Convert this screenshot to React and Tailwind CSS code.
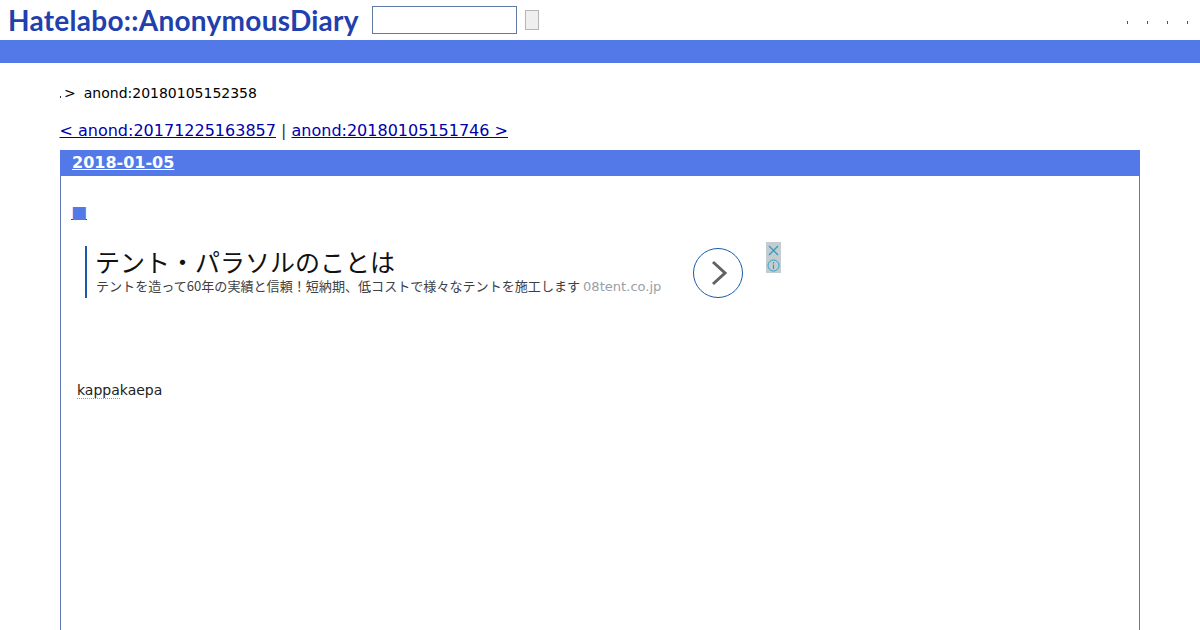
import React from 'react';

function AdSection() {
  return (
    <div className="ml-[24px] mt-[18px] flex h-[56px] items-start">
      <div className="mt-[4px] h-[52px] w-[608px] border-l-[2px] border-[#1a5aa8] pl-[8px]">
        <div className="h-[32px] whitespace-nowrap font-['Noto_Sans_CJK_JP',sans-serif] text-[25px] leading-[30px] text-[#111]">
          テント・パラソルのことは
        </div>
        <div className="ml-[1px] h-[20px] whitespace-nowrap font-['Noto_Sans_CJK_JP',sans-serif] text-[13.07px] leading-[16px] text-[#3c4043]">
          テントを造って60年の実績と信頼！短納期、低コストで様々なテントを施工します{' '}
          <span className="font-['DejaVu_Sans',sans-serif] text-[#9aa0a6]">08tent.co.jp</span>
        </div>
      </div>
      <div className="mt-[6px] flex h-[50px] w-[50px] shrink-0 items-center justify-center rounded-full border border-[#1a5aa8]">
        <svg width="18" height="26" viewBox="0 0 18 26" fill="none" className="ml-[2px]">
          <path d="M3 2l12 11L3 24" stroke="#5f6368" strokeWidth="3" />
        </svg>
      </div>
      <div className="ml-[23px] flex flex-col">
        <div className="flex h-[16px] w-[15px] items-center justify-center bg-[#c4ccd0]">
          <svg width="11" height="11" viewBox="0 0 11 11" fill="none">
            <path d="M1 1l9 9M10 1l-9 9" stroke="#2e9fc4" strokeWidth="1.4" />
          </svg>
        </div>
        <div className="flex h-[15px] w-[15px] items-center justify-center bg-[#c4ccd0]">
          <svg width="13" height="13" viewBox="0 0 13 13" fill="none">
            <circle cx="6.5" cy="6.5" r="5.5" stroke="#2e9fc4" />
            <path d="M6.5 5.5v4.5M6.5 3v1.5" stroke="#2e9fc4" strokeWidth="1.2" />
          </svg>
        </div>
      </div>
    </div>
  );
}

export default function App() {
  return (
    <div className="h-[630px] overflow-hidden bg-white font-['DejaVu_Sans',sans-serif] text-[#222]">
      <header className="flex h-[40px] items-start">
        <div className="ml-[8px] mt-[2px] w-[352px] whitespace-nowrap font-['Lato',sans-serif] text-[28px] font-bold leading-[36px] tracking-[0.27px] text-[#1f40ad]">
          Hatelabo::AnonymousDiary
        </div>
        <input
          type="text"
          className="ml-[12px] mt-[6px] h-[28px] w-[145px] border border-[#5f7ba3] bg-white"
        />
        <button className="ml-[8px] mt-[10px] h-[20px] w-[14px] border border-[#b5b5b5] bg-[#efefef]" />
        <div className="ml-auto mr-[3px] mt-[21px] flex">
          <span className="ml-[19px] h-[3px] w-[1px] bg-[#555]" />
          <span className="ml-[19px] h-[3px] w-[1px] bg-[#555]" />
          <span className="ml-[19px] h-[3px] w-[1px] bg-[#555]" />
          <span className="ml-[19px] mr-[9px] h-[3px] w-[1px] bg-[#555]" />
        </div>
      </header>
      <div className="h-[23px] bg-[#5279e7]" />

      <main className="mx-[60px]">
        <div className="mt-[21px] flex h-[18px] items-center whitespace-nowrap text-[14px] leading-[18px] text-black">
          <span className="mt-[7px] h-[2px] w-[1px] bg-[#333]" />
          <span className="ml-[3px]">&gt;</span>
          <span className="ml-[8px]">anond:20180105152358</span>
        </div>
        <div className="ml-[-0.5px] mt-[19px] h-[20px] whitespace-nowrap text-[16px] leading-[20px] text-[#333]">
          <a href="#" className="text-[#0000a8] underline">&lt; anond:20171225163857</a>
          {' | '}
          <a href="#" className="text-[#0000a8] underline">anond:20180105151746 &gt;</a>
        </div>

        <section className="mt-[9px] h-[600px] border border-t-0 border-[#5f78b8]">
          <h2 className="ml-[-1px] mr-[-1px] h-[26px] bg-[#5279e7] pl-[12px] pt-[1px] text-[16px] font-bold leading-[24px] text-white">
            <a href="#" className="underline">2018-01-05</a>
          </h2>
          <div className="ml-[10px] mt-[24px] h-[24px] text-[17px] leading-[24px]">
            <a href="#" className="text-[#5279e7] underline decoration-[#1f40ad]">■</a>
          </div>
          <AdSection />
          <p className="ml-[16px] mt-[82px] text-[14px] leading-[20px] text-[#222]">
            <span className="border-b border-dotted border-[#999]">kappa</span>kaepa
          </p>
        </section>
      </main>
    </div>
  );
}
